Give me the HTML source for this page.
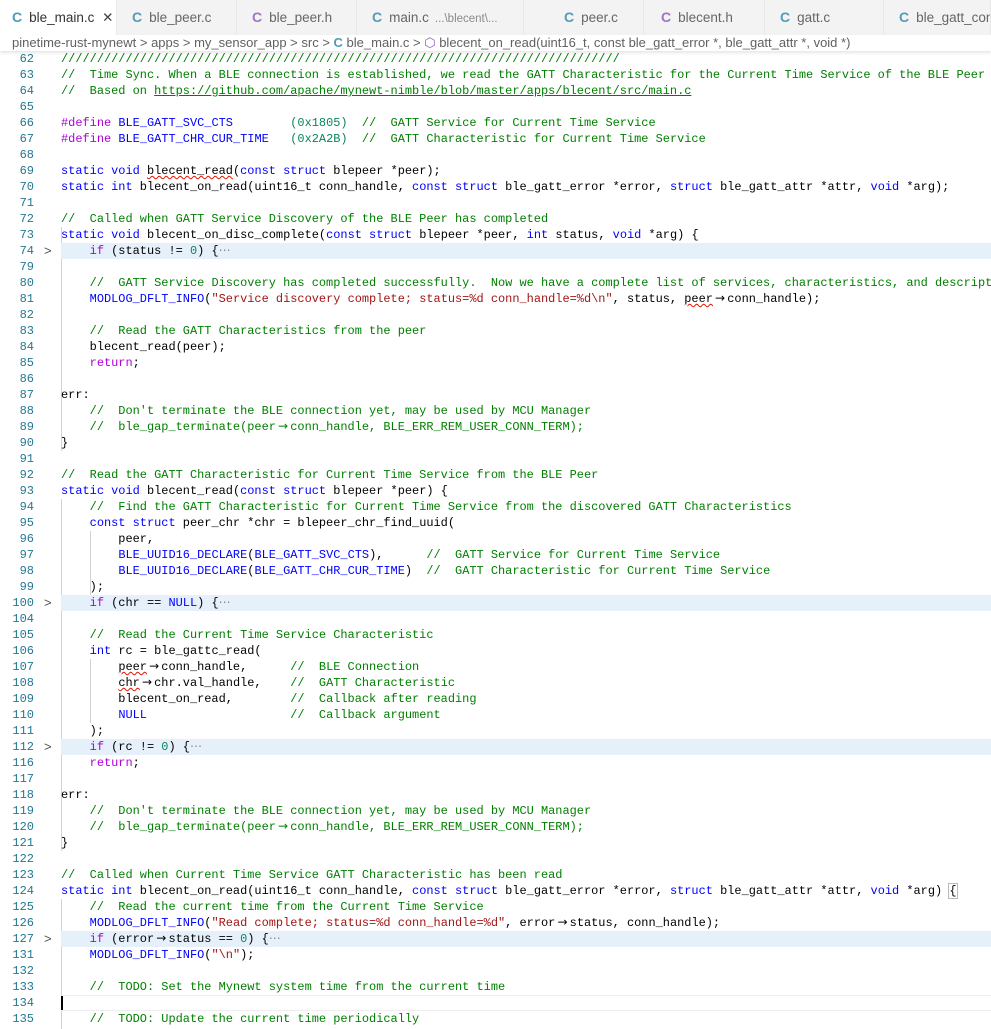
<!DOCTYPE html>
<html><head><meta charset="utf-8"><style>
*{margin:0;padding:0;box-sizing:border-box}
body{width:991px;height:1025px;overflow:hidden;background:#fff;position:relative;font-family:"Liberation Sans",sans-serif}
#tabs{position:absolute;left:0;top:0;width:991px;height:35px;background:#f3f3f3}
.tab{position:absolute;top:0;height:35px;border-right:1px solid #e8e8e8;font-size:13.5px;color:#666;line-height:34px;white-space:nowrap;overflow:hidden}
.tab.act{background:#fff;color:#333}
.tab b{font-weight:bold;color:#519aba;margin-right:7px;font-size:14px}
.tab b.h{color:#a074c4}
.tab small{font-size:11.5px;color:#8a8a8a;margin-left:6px}
#crumb{position:absolute;left:0;top:35px;width:991px;height:16px;background:#fff;font-size:13px;color:#616161;line-height:16px;padding-left:12px;white-space:nowrap;box-shadow:0 2px 3px rgba(0,0,0,.10);z-index:3}
#crumb b{color:#519aba;font-weight:bold}
#code{position:absolute;left:0;top:51px;width:991px}
.l{position:relative;height:16px;line-height:16px;font-family:"Liberation Mono",monospace;font-size:11.95px;white-space:pre;color:#000}
.n{position:absolute;left:0;width:34px;text-align:right;color:#237893;font-size:12px}
.f{position:absolute;left:44px;color:#555;font-family:"Liberation Sans",sans-serif;font-size:13px}
.t{position:absolute;left:61px;right:0;top:0;height:16px}
.hl .t{background:#e5f0fb}
.cur .t{border-top:1px solid #eee;border-bottom:1px solid #eee;line-height:14px}
.c{color:#008000}.k{color:#0000ff}.p{color:#af00db}.s{color:#a31515}.x{color:#098658}.m{color:#0000ff}
.u{text-decoration:underline}
.w{text-decoration:underline wavy #e51400;text-decoration-thickness:1px}
.a{display:inline-block;width:14.34px;text-align:center;font-family:"DejaVu Sans",sans-serif;font-size:12px;line-height:14px}
.g{position:absolute;width:1px;background:#d3d3d3}
.dots{color:#888}
</style></head><body>
<div id="tabs">
<div class="tab act" style="left:0;width:117px;padding-left:12px"><b>C</b>ble_main.c <span style="color:#444;margin-left:4px">✕</span></div>
<div class="tab" style="left:117px;width:120px;padding-left:15px"><b>C</b>ble_peer.c</div>
<div class="tab" style="left:237px;width:120px;padding-left:15px"><b class="h">C</b>ble_peer.h</div>
<div class="tab" style="left:357px;width:167px;padding-left:15px"><b>C</b>main.c<small>...\blecent\...</small></div>
<div class="tab" style="left:524px;width:120px;padding-left:40px"><b>C</b>peer.c</div>
<div class="tab" style="left:644px;width:121px;padding-left:17px"><b class="h">C</b>blecent.h</div>
<div class="tab" style="left:765px;width:119px;padding-left:15px"><b>C</b>gatt.c</div>
<div class="tab" style="left:884px;width:107px;padding-left:15px"><b>C</b>ble_gatt_conn.c</div>
</div>
<div id="crumb">pinetime-rust-mynewt &gt; apps &gt; my_sensor_app &gt; src &gt; <b>C</b> ble_main.c &gt; <span style="color:#8a5fc4">⬡</span> blecent_on_read(uint16_t, const ble_gatt_error *, ble_gatt_attr *, void *)</div>
<div id="code">
<div class="g" style="left:61px;top:176px;height:224px"></div>
<div class="g" style="left:61px;top:448px;height:352px"></div>
<div class="g" style="left:90px;top:480px;height:64px"></div>
<div class="g" style="left:90px;top:608px;height:64px"></div>
<div class="g" style="left:61px;top:848px;height:130px"></div>
<div class="l"><span class="n">62</span><span class="t"><span class="c">//////////////////////////////////////////////////////////////////////////////</span></span></div>
<div class="l"><span class="n">63</span><span class="t"><span class="c">//  Time Sync. When a BLE connection is established, we read the GATT Characteristic for the Current Time Service of the BLE Peer</span></span></div>
<div class="l"><span class="n">64</span><span class="t"><span class="c">//  Based on <span class="u">https://github.com/apache/mynewt-nimble/blob/master/apps/blecent/src/main.c</span></span></span></div>
<div class="l"><span class="n">65</span><span class="t"></span></div>
<div class="l"><span class="n">66</span><span class="t"><span class="p">#define</span> <span class="m">BLE_GATT_SVC_CTS</span>        <span class="x">(0x1805)</span>  <span class="c">//  GATT Service for Current Time Service</span></span></div>
<div class="l"><span class="n">67</span><span class="t"><span class="p">#define</span> <span class="m">BLE_GATT_CHR_CUR_TIME</span>   <span class="x">(0x2A2B)</span>  <span class="c">//  GATT Characteristic for Current Time Service</span></span></div>
<div class="l"><span class="n">68</span><span class="t"></span></div>
<div class="l"><span class="n">69</span><span class="t"><span class="k">static void</span> <span class="w">blecent_read</span>(<span class="k">const struct</span> blepeer *peer);</span></div>
<div class="l"><span class="n">70</span><span class="t"><span class="k">static int</span> blecent_on_read(uint16_t conn_handle, <span class="k">const struct</span> ble_gatt_error *error, <span class="k">struct</span> ble_gatt_attr *attr, <span class="k">void</span> *arg);</span></div>
<div class="l"><span class="n">71</span><span class="t"></span></div>
<div class="l"><span class="n">72</span><span class="t"><span class="c">//  Called when GATT Service Discovery of the BLE Peer has completed</span></span></div>
<div class="l"><span class="n">73</span><span class="t"><span class="k">static void</span> blecent_on_disc_complete(<span class="k">const struct</span> blepeer *peer, <span class="k">int</span> status, <span class="k">void</span> *arg) {</span></div>
<div class="l hl"><span class="n">74</span><span class="f">&gt;</span><span class="t">    <span class="p">if</span> (status != <span class="x">0</span>) {<span class="dots">⋯</span></span></div>
<div class="l"><span class="n">79</span><span class="t"></span></div>
<div class="l"><span class="n">80</span><span class="t">    <span class="c">//  GATT Service Discovery has completed successfully.  Now we have a complete list of services, characteristics, and descript</span></span></div>
<div class="l"><span class="n">81</span><span class="t">    <span class="m">MODLOG_DFLT_INFO</span>(<span class="s">"Service discovery complete; status=%d conn_handle=%d\n"</span>, status, <span class="w">peer</span><span class="a">→</span>conn_handle);</span></div>
<div class="l"><span class="n">82</span><span class="t"></span></div>
<div class="l"><span class="n">83</span><span class="t">    <span class="c">//  Read the GATT Characteristics from the peer</span></span></div>
<div class="l"><span class="n">84</span><span class="t">    blecent_read(peer);</span></div>
<div class="l"><span class="n">85</span><span class="t">    <span class="p">return</span>;</span></div>
<div class="l"><span class="n">86</span><span class="t"></span></div>
<div class="l"><span class="n">87</span><span class="t">err:</span></div>
<div class="l"><span class="n">88</span><span class="t">    <span class="c">//  Don't terminate the BLE connection yet, may be used by MCU Manager</span></span></div>
<div class="l"><span class="n">89</span><span class="t">    <span class="c">//  ble_gap_terminate(peer<span class="a">→</span>conn_handle, BLE_ERR_REM_USER_CONN_TERM);</span></span></div>
<div class="l"><span class="n">90</span><span class="t">}</span></div>
<div class="l"><span class="n">91</span><span class="t"></span></div>
<div class="l"><span class="n">92</span><span class="t"><span class="c">//  Read the GATT Characteristic for Current Time Service from the BLE Peer</span></span></div>
<div class="l"><span class="n">93</span><span class="t"><span class="k">static void</span> blecent_read(<span class="k">const struct</span> blepeer *peer) {</span></div>
<div class="l"><span class="n">94</span><span class="t">    <span class="c">//  Find the GATT Characteristic for Current Time Service from the discovered GATT Characteristics</span></span></div>
<div class="l"><span class="n">95</span><span class="t">    <span class="k">const struct</span> peer_chr *chr = blepeer_chr_find_uuid(</span></div>
<div class="l"><span class="n">96</span><span class="t">        peer,</span></div>
<div class="l"><span class="n">97</span><span class="t">        <span class="m">BLE_UUID16_DECLARE</span>(<span class="m">BLE_GATT_SVC_CTS</span>),      <span class="c">//  GATT Service for Current Time Service</span></span></div>
<div class="l"><span class="n">98</span><span class="t">        <span class="m">BLE_UUID16_DECLARE</span>(<span class="m">BLE_GATT_CHR_CUR_TIME</span>)  <span class="c">//  GATT Characteristic for Current Time Service</span></span></div>
<div class="l"><span class="n">99</span><span class="t">    );</span></div>
<div class="l hl"><span class="n">100</span><span class="f">&gt;</span><span class="t">    <span class="p">if</span> (chr == <span class="m">NULL</span>) {<span class="dots">⋯</span></span></div>
<div class="l"><span class="n">104</span><span class="t"></span></div>
<div class="l"><span class="n">105</span><span class="t">    <span class="c">//  Read the Current Time Service Characteristic</span></span></div>
<div class="l"><span class="n">106</span><span class="t">    <span class="k">int</span> rc = ble_gattc_read(</span></div>
<div class="l"><span class="n">107</span><span class="t">        <span class="w">peer</span><span class="a">→</span>conn_handle,      <span class="c">//  BLE Connection</span></span></div>
<div class="l"><span class="n">108</span><span class="t">        <span class="w">chr</span><span class="a">→</span>chr.val_handle,    <span class="c">//  GATT Characteristic</span></span></div>
<div class="l"><span class="n">109</span><span class="t">        blecent_on_read,        <span class="c">//  Callback after reading</span></span></div>
<div class="l"><span class="n">110</span><span class="t">        <span class="m">NULL</span>                    <span class="c">//  Callback argument</span></span></div>
<div class="l"><span class="n">111</span><span class="t">    );</span></div>
<div class="l hl"><span class="n">112</span><span class="f">&gt;</span><span class="t">    <span class="p">if</span> (rc != <span class="x">0</span>) {<span class="dots">⋯</span></span></div>
<div class="l"><span class="n">116</span><span class="t">    <span class="p">return</span>;</span></div>
<div class="l"><span class="n">117</span><span class="t"></span></div>
<div class="l"><span class="n">118</span><span class="t">err:</span></div>
<div class="l"><span class="n">119</span><span class="t">    <span class="c">//  Don't terminate the BLE connection yet, may be used by MCU Manager</span></span></div>
<div class="l"><span class="n">120</span><span class="t">    <span class="c">//  ble_gap_terminate(peer<span class="a">→</span>conn_handle, BLE_ERR_REM_USER_CONN_TERM);</span></span></div>
<div class="l"><span class="n">121</span><span class="t">}</span></div>
<div class="l"><span class="n">122</span><span class="t"></span></div>
<div class="l"><span class="n">123</span><span class="t"><span class="c">//  Called when Current Time Service GATT Characteristic has been read</span></span></div>
<div class="l"><span class="n">124</span><span class="t"><span class="k">static int</span> blecent_on_read(uint16_t conn_handle, <span class="k">const struct</span> ble_gatt_error *error, <span class="k">struct</span> ble_gatt_attr *attr, <span class="k">void</span> *arg) <span style="outline:1px solid #b9b9b9">{</span></span></div>
<div class="l"><span class="n">125</span><span class="t">    <span class="c">//  Read the current time from the Current Time Service</span></span></div>
<div class="l"><span class="n">126</span><span class="t">    <span class="m">MODLOG_DFLT_INFO</span>(<span class="s">"Read complete; status=%d conn_handle=%d"</span>, error<span class="a">→</span>status, conn_handle);</span></div>
<div class="l hl"><span class="n">127</span><span class="f">&gt;</span><span class="t">    <span class="p">if</span> (error<span class="a">→</span>status == <span class="x">0</span>) {<span class="dots">⋯</span></span></div>
<div class="l"><span class="n">131</span><span class="t">    <span class="m">MODLOG_DFLT_INFO</span>(<span class="s">"\n"</span>);</span></div>
<div class="l"><span class="n">132</span><span class="t"></span></div>
<div class="l"><span class="n">133</span><span class="t">    <span class="c">//  TODO: Set the Mynewt system time from the current time</span></span></div>
<div class="l cur"><span class="n">134</span><span class="t"><span style="position:absolute;left:0;top:0;width:2px;height:14px;background:#000"></span></span></div>
<div class="l"><span class="n">135</span><span class="t">    <span class="c">//  TODO: Update the current time periodically</span></span></div>
</div>
</body></html>
